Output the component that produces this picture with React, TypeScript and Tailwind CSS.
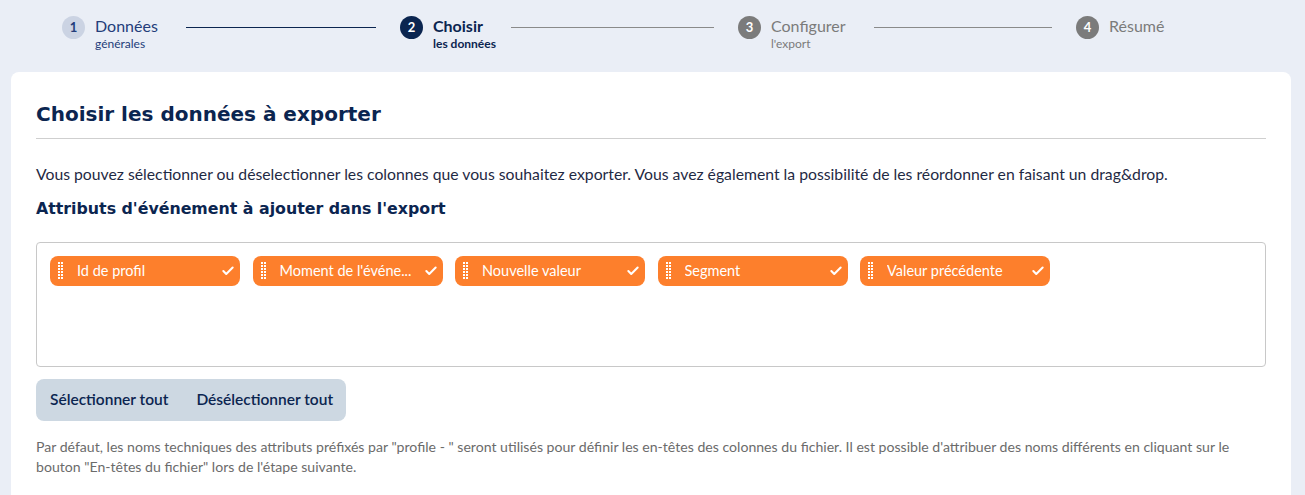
import { Check } from "lucide-react"

const steps = [
  { n: 1, title: "Données", sub: "générales", state: "done", labelW: "w-[91px]" },
  { n: 2, title: "Choisir", sub: "les données", state: "active", labelW: "w-[78px]" },
  { n: 3, title: "Configurer", sub: "l'export", state: "todo", labelW: "w-[103px]" },
  { n: 4, title: "Résumé", sub: "", state: "todo", labelW: "" },
]

const attributes = ["Id de profil", "Moment de l'événe...", "Nouvelle valeur", "Segment", "Valeur précédente"]

const DragHandle = () => (
  <svg width="5" height="18" viewBox="0 0 5 18" className="shrink-0">
    {[0, 1, 2, 3, 4, 5].map((r) => (
      <g key={r} fill="white">
        <rect x="0" y={r * 3} width="2" height="2" />
        <rect x="3" y={r * 3} width="2" height="2" />
      </g>
    ))}
  </svg>
)

const App = () => {
  const circleClass = (state: string) => {
    switch (state) {
      case "done": return "bg-[#cbd3e3] text-[#233d7a]"
      case "active": return "bg-[#0b2550] text-white"
      default: return "bg-[#7b7b7b] text-white"
    }
  }

  const labelClass = (state: string) => {
    switch (state) {
      case "active": return "font-bold text-[#0b2550]"
      case "done": return "text-[#233d7a]"
      default: return "text-[#7b7b7b]"
    }
  }

  return (
    <div className="min-h-[495px] bg-[#eaeef6] font-['Lato',sans-serif] overflow-hidden">
      {/* Stepper */}
      <div className="flex h-[72px] pl-[62px] pt-[16px]">
        {steps.map((s, i) => (
          <div key={s.n} className={i < 3 ? "flex w-[338px]" : "flex"}>
            <div
              className={`flex h-[23px] w-[23px] shrink-0 items-center justify-center rounded-full text-[13px] font-bold ${circleClass(s.state)}`}
            >
              {s.n}
            </div>
            <div className={`ml-[10px] shrink-0 ${s.labelW}`}>
              <div className={`text-[16px] leading-[20px] ${labelClass(s.state)}`}>{s.title}</div>
              {s.sub && <div className={`text-[12px] leading-[16px] ${labelClass(s.state)}`}>{s.sub}</div>}
            </div>
            {i < 3 && (
              <div
                className={`mr-[24px] mt-[11px] h-px flex-1 ${
                  s.state === "done" ? "bg-[#0b2550]" : "bg-[#8a8a8a]"
                }`}
              />
            )}
          </div>
        ))}
      </div>

      {/* Card */}
      <div className="ml-[11px] mr-[14px] min-h-[440px] rounded-lg bg-white px-[25px] pt-[27px] pb-[30px]">
        <h1 className="font-['DejaVu_Sans',sans-serif] text-[20px] font-bold leading-[30px] text-[#0b2550]">
          Choisir les données à exporter
        </h1>
        <div className="mt-[9px] h-px bg-[#cfcfcf]" />

        <p className="mt-[25px] text-[15.75px] leading-[20px] text-[#1f2a44]">
          Vous pouvez sélectionner ou déselectionner les colonnes que vous souhaitez exporter. Vous avez également la
          possibilité de les réordonner en faisant un drag&amp;drop.
        </p>

        <h2 className="mt-[14px] font-['DejaVu_Sans',sans-serif] text-[15.8px] font-bold leading-[22px] text-[#0b2550]">
          Attributs d'événement à ajouter dans l'export
        </h2>

        <div className="mt-[22px] h-[125px] rounded border border-[#c8c8c8] px-[13px] pt-[13px]">
          <div className="flex gap-[12.5px]">
            {attributes.map((a) => (
              <div
                key={a}
                className="flex h-[30px] w-[190px] items-center rounded-lg bg-[#fd7f2c] pl-[8px] pr-[5px] text-white"
              >
                <DragHandle />
                <span className="ml-[14px] flex-1 truncate text-[14.5px]">{a}</span>
                <Check className="h-[14px] w-[14px]" strokeWidth={3.5} />
              </div>
            ))}
          </div>
        </div>

        <div className="mt-[12px] inline-flex h-[42px] items-center gap-[28px] rounded-lg bg-[#cdd8e2] pl-[14px] pr-[13px] text-[15.5px] font-semibold text-[#0b2550]">
          <span>Sélectionner tout</span>
          <span>Désélectionner tout</span>
        </div>

        <p className="mt-[16px] text-[14.1px] leading-[20px] text-[#6b6b6b]">
          Par défaut, les noms techniques des attributs préfixés par "profile - " seront utilisés pour définir les
          en-têtes des colonnes du fichier. Il est possible d'attribuer des noms différents en cliquant sur le bouton
          "En-têtes du fichier" lors de l'étape suivante.
        </p>
      </div>
    </div>
  )
}

export default App
